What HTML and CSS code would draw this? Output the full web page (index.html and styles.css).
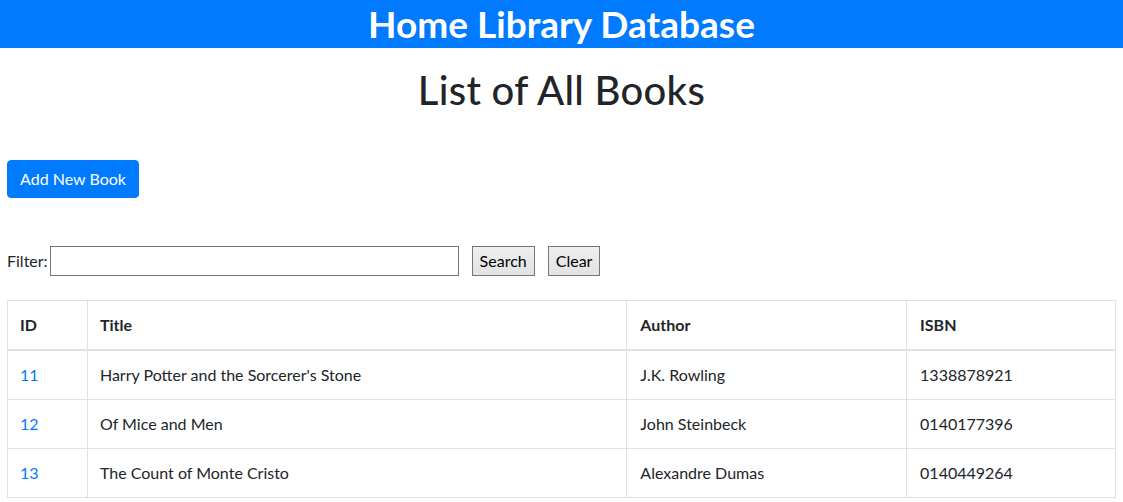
FILE: index.html
```html
<!DOCTYPE html>
<html lang="en">
<head>
<meta charset="utf-8">
<title>Home Library Database</title>
<link rel="stylesheet" href="styles.css">
</head>
<body>
<header class="site-header">
  <h2 class="site-title">Home Library Database</h2>
</header>
<main class="content">
  <h1 class="page-title">List of All Books</h1>
  <div class="actions">
    <button class="btn-primary" type="button">Add New Book</button>
  </div>
  <form class="filter-form">
    <label class="filter-label" for="filter">Filter:</label>
    <input class="filter-input" id="filter" type="text">
    <button class="btn-plain" type="button">Search</button>
    <button class="btn-plain" type="button">Clear</button>
  </form>
  <table class="books">
    <colgroup>
      <col class="col-id">
      <col class="col-title">
      <col class="col-author">
      <col class="col-isbn">
    </colgroup>
    <thead>
      <tr><th>ID</th><th>Title</th><th class="wide-pad">Author</th><th class="wide-pad">ISBN</th></tr>
    </thead>
    <tbody>
      <tr><td><a href="#">11</a></td><td>Harry Potter and the Sorcerer's Stone</td><td class="wide-pad">J.K. Rowling</td><td class="wide-pad">1338878921</td></tr>
      <tr><td><a href="#">12</a></td><td>Of Mice and Men</td><td class="wide-pad">John Steinbeck</td><td class="wide-pad">0140177396</td></tr>
      <tr><td><a href="#">13</a></td><td>The Count of Monte Cristo</td><td class="wide-pad">Alexandre Dumas</td><td class="wide-pad">0140449264</td></tr>
    </tbody>
  </table>
</main>
</body>
</html>
```
FILE: styles.css
```css
* { box-sizing: border-box; }

body {
  margin: 0;
  font-family: "Lato", "Noto Sans", "Liberation Sans", sans-serif;
  font-size: 16px;
  line-height: 1.5;
  color: #212529;
  background: #fff;
}

.site-header {
  background: #007bff;
  height: 48px;
  display: flex;
  align-items: center;
  justify-content: center;
}

.site-title {
  margin: 0;
  color: #fff;
  font-size: 37px;
  font-weight: 700;
  line-height: 1.2;
}

.content {
  padding: 0 7px;
}

.page-title {
  margin: 18px 0 0;
  text-align: center;
  font-size: 40px;
  font-weight: 500;
  line-height: 48px;
  letter-spacing: 0.3px;
}

.actions {
  margin-top: 46px;
}

.btn-primary {
  font: inherit;
  color: #fff;
  background: #007bff;
  border: 1px solid #007bff;
  border-radius: 4px;
  padding: 6px 12px;
  height: 38px;
  line-height: 24px;
  width: 132px;
}

.filter-form {
  margin-top: 48px;
  display: flex;
  align-items: center;
  height: 30px;
}

.filter-label {
  margin-right: 2px;
}

.filter-input {
  width: 409px;
  height: 30px;
  border: 1px solid #767676;
  font: inherit;
  margin-right: 13px;
}

.btn-plain {
  font: inherit;
  color: #000;
  height: 30px;
  padding: 0 7px;
  border: 1px solid #767676;
  background: linear-gradient(#efefef, #e2e2e2);
  margin-right: 13px;
  line-height: 28px;
}

.books {
  margin-top: 24px;
  width: 1109px;
  border-collapse: collapse;
  border: 1px solid #dee2e6;
}

.col-id { width: 80px; }
.col-title { width: 540px; }
.col-author { width: 280px; }
.col-isbn { width: 209px; }

.books th,
.books td {
  border: 1px solid #dee2e6;
  padding: 12px;
  text-align: left;
  vertical-align: top;
  line-height: 24px;
}

.books .wide-pad {
  padding-left: 13px;
}

.books th {
  font-weight: 700;
  border-bottom: 2px solid #dee2e6;
}

.books a {
  color: #007bff;
  text-decoration: none;
}
```
